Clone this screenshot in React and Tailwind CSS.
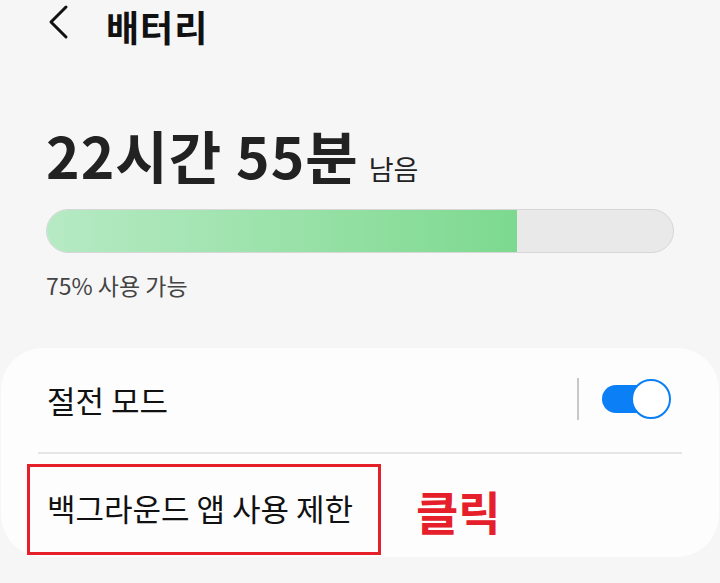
import React from 'react';

const KR = "font-['Noto_Sans_CJK_KR','Noto_Sans',sans-serif]";

function BackIcon() {
  return (
    <svg width="24" height="36" viewBox="0 0 24 36" fill="none">
      <path d="M20 3 L5 18 L20 33" stroke="#111" strokeWidth="3" strokeLinecap="round" strokeLinejoin="round" />
    </svg>
  );
}

function Toggle() {
  return (
    <div className="relative w-[70px] h-[40px] flex items-center">
      <div className="w-[62px] h-[28px] rounded-full bg-[#0b7ff5] ml-[1px]" />
      <div className="absolute right-0 top-0 w-[40px] h-[40px] rounded-full bg-white border-[2px] border-[#0b7ff5]" />
    </div>
  );
}

export default function App() {
  return (
    <div className={`w-[720px] h-[583px] overflow-hidden bg-[#f6f6f6] text-[#111] ${KR}`}>
      <header className="flex items-start h-[52px] pl-[46px]">
        <div className="mt-[4px]">
          <BackIcon />
        </div>
        <h1 className="ml-[36px] text-[36px] font-bold leading-[52px] tracking-[1px]">배터리</h1>
      </header>

      <section className="px-[46px] pt-[74px]">
        <div className="flex items-end">
          <span className="text-[57px] font-bold leading-none tracking-[1px] text-[#222]">22시간 55분</span>
          <span className="ml-[10px] mb-[1px] text-[27px] leading-none text-[#222]">남음</span>
        </div>

        <div className="mt-[26px] h-[44px] rounded-full bg-[#e9e9e9] border border-[#d6d6d6] overflow-hidden flex">
          <div className="h-full w-[75%] bg-gradient-to-r from-[#b6eac4] to-[#7dd98f]" />
        </div>

        <p className="mt-[21px] text-[23px] leading-none text-[#444]">75% 사용 가능</p>
      </section>

      <div className="mt-[51px] mx-[1px] rounded-[42px] bg-[#fdfdfd] pt-[27px] pb-[2px]">
        <div className="flex items-center h-[48px] pl-[46px] pr-[48px]">
          <span className="flex-1 text-[31px] leading-none">절전 모드</span>
          <div className="w-[2px] h-[42px] bg-[#c8c8c8] mr-[22px]" />
          <Toggle />
        </div>
        <div className="mt-[29px] mx-[37px] h-[2px] bg-[#e6e6e6]" />
        <div className="flex items-center mt-[10px] pl-[26px]">
          <div className="w-[354px] h-[91px] border-[3px] border-[#e5202a] flex items-center pl-[17px] pb-[4px]">
            <span className="text-[31px] leading-none">백그라운드 앱 사용 제한</span>
          </div>
          <span className="ml-[35px] text-[46px] font-bold leading-none text-[#e5202a]">클릭</span>
        </div>
      </div>
    </div>
  );
}
